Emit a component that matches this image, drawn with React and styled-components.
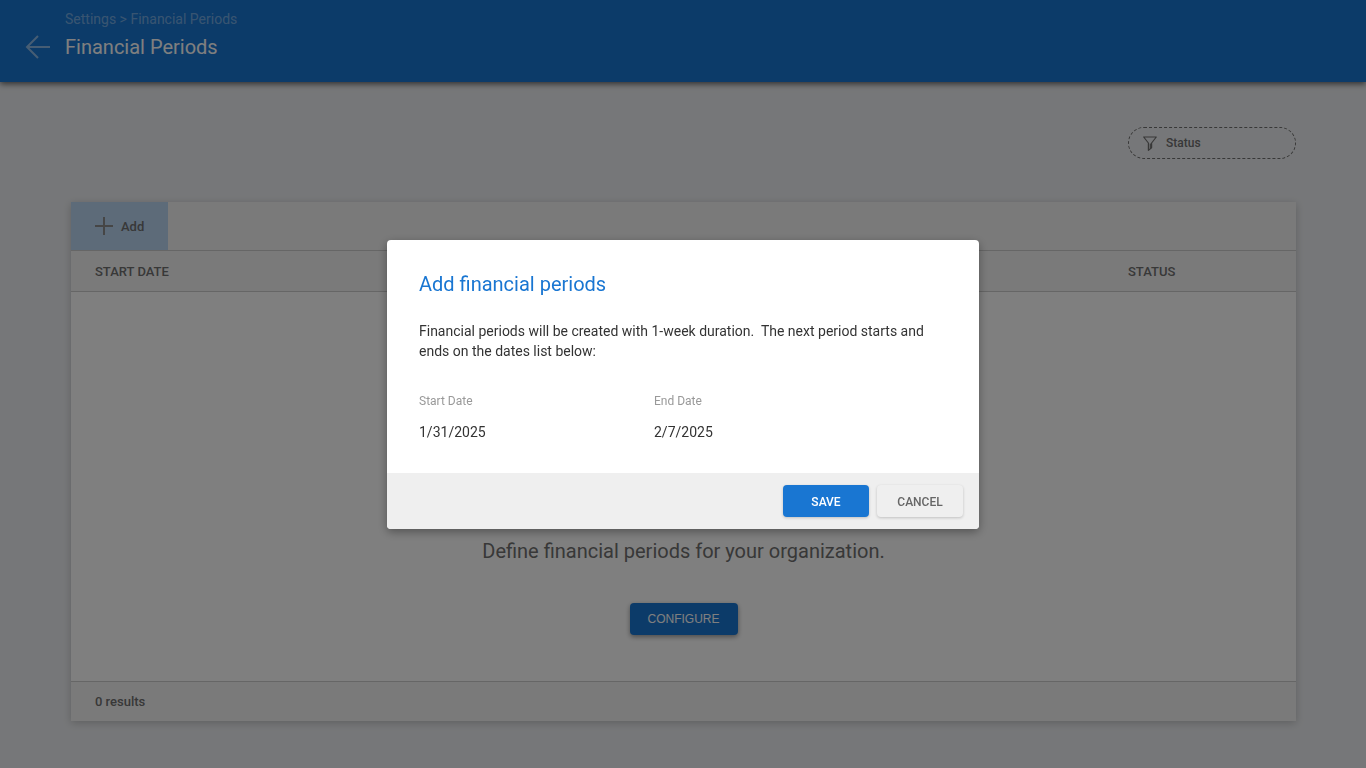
import styled, { createGlobalStyle } from "styled-components";

const periods = { start: "1/31/2025", end: "2/7/2025" };

export default function App() {
  return (
    <>
      <GlobalStyle />
      <Page>
        <Header>
          <BackLink href="#settings" aria-label="Back to settings">
            <svg width="26" height="24" viewBox="0 0 26 24" fill="none" stroke="currentColor" strokeWidth="2">
              <path d="M25 12H2M13 1L2 12l11 11" />
            </svg>
          </BackLink>
          <div>
            <Breadcrumb>
              <a href="#settings">Settings</a> &gt; Financial Periods
            </Breadcrumb>
            <Title>Financial Periods</Title>
          </div>
        </Header>
        <Main>
          <Filters>
            <FilterButton type="button">
              <svg width="14" height="15" viewBox="0 0 14 15" fill="none" stroke="currentColor" strokeWidth="1.2" strokeLinejoin="round">
                <path d="M.7 1h12.6L8.6 7v4.8l-3.2 2.5V7z" />
                <path d="M7.3 7.5v4.8" />
              </svg>
              Status
            </FilterButton>
          </Filters>
          <Card>
            <Toolbar>
              <AddButton type="button">
                <svg width="18" height="18" viewBox="0 0 18 18" fill="none" stroke="#8c8c8c" strokeWidth="2">
                  <path d="M9 0v18M0 9h18" />
                </svg>
                Add
              </AddButton>
            </Toolbar>
            <Table>
              <thead>
                <tr>
                  <HeadCell scope="col">START DATE</HeadCell>
                  <HeadCell scope="col" $narrow>STATUS</HeadCell>
                </tr>
              </thead>
            </Table>
            <Empty>
              <EmptyText>Define financial periods for your organization.</EmptyText>
              <ConfigureButton type="button">CONFIGURE</ConfigureButton>
            </Empty>
            <CardFooter>0 results</CardFooter>
          </Card>
        </Main>
      </Page>
      <Overlay>
        <Dialog role="dialog" aria-modal="true" aria-labelledby="dialog-title">
          <DialogBody>
            <DialogTitle id="dialog-title">Add financial periods</DialogTitle>
            <DialogText>
              Financial periods will be created with 1-week duration.&nbsp; The next period starts and
              ends on the dates list below:
            </DialogText>
            <Dates>
              <div>
                <DateLabel>Start Date</DateLabel>
                <DateValue>{periods.start}</DateValue>
              </div>
              <div>
                <DateLabel>End Date</DateLabel>
                <DateValue>{periods.end}</DateValue>
              </div>
            </Dates>
          </DialogBody>
          <DialogFooter>
            <DialogButton type="button" $primary>SAVE</DialogButton>
            <DialogButton type="button">CANCEL</DialogButton>
          </DialogFooter>
        </Dialog>
      </Overlay>
    </>
  );
}

const GlobalStyle = createGlobalStyle`
  * {
    box-sizing: border-box;
  }

  body {
    margin: 0;
    background: #edeff2;
    color: #707070;
    font-family: Roboto, sans-serif;
    font-size: 14px;
  }

  button {
    font-family: inherit;
    cursor: pointer;
  }

  svg {
    display: block;
    flex: none;
  }
`;

const Page = styled.div`
  display: flex;
  flex-direction: column;
  min-height: 100vh;
`;

const Header = styled.header`
  display: flex;
  align-items: flex-end;
  gap: 14px;
  height: 82px;
  padding: 0 25px 23px;
  background: #1976d2;
  box-shadow: 0 2px 6px rgba(0, 0, 0, 0.6);
  color: #fff;
`;

const BackLink = styled.a`
  color: rgba(255, 255, 255, 0.5);
`;

const Breadcrumb = styled.nav`
  line-height: 20px;
  color: rgba(255, 255, 255, 0.4);

  a {
    color: inherit;
    text-decoration: none;
  }
`;

const Title = styled.h1`
  margin: 6px 0 0;
  font-size: 20px;
  font-weight: 400;
  line-height: 24px;
`;

const Main = styled.main`
  display: flex;
  flex: 1;
  flex-direction: column;
  padding: 45px 70px 47px 71px;
`;

const Filters = styled.div`
  display: flex;
  justify-content: flex-end;
  margin-bottom: 43px;
`;

const FilterButton = styled.button`
  display: flex;
  align-items: center;
  gap: 9px;
  width: 168px;
  height: 32px;
  padding: 0 14px;
  border: 1px dashed #707070;
  border-radius: 16px;
  background: none;
  color: #707070;
  font-size: 12px;
  font-weight: 500;
`;

const Card = styled.section`
  display: flex;
  flex: 1;
  flex-direction: column;
  background: #fff;
  box-shadow: 0 2px 8px rgba(0, 0, 0, 0.2);
`;

const Toolbar = styled.div`
  display: flex;
  height: 48px;
  background: #f5f5f5;
`;

const AddButton = styled.button`
  display: flex;
  align-items: center;
  gap: 8px;
  padding: 0 24px;
  border: 0;
  background: #bad6f2;
  color: #707070;
  font-size: 13px;
  font-weight: 500;
`;

const Table = styled.table`
  width: 100%;
  border-spacing: 0;
  background: #f5f5f5;
`;

const HeadCell = styled.th`
  width: ${(props) => (props.$narrow ? "192px" : "auto")};
  height: 42px;
  padding: 0 24px;
  border: solid #ccc;
  border-width: 1px 0;
  font-size: 13px;
  font-weight: 500;
  text-align: left;
`;

const Empty = styled.div`
  display: flex;
  flex: 1;
  flex-direction: column;
  align-items: center;
  justify-content: flex-end;
  gap: 40px;
  padding-bottom: 46px;
`;

const EmptyText = styled.p`
  margin: 0;
  font-size: 20px;
  line-height: 24px;
`;

const ConfigureButton = styled.button`
  height: 32px;
  padding: 0 18px;
  border: 0;
  border-radius: 4px;
  background: #1976d2;
  box-shadow: 0 2px 5px rgba(0, 0, 0, 0.4);
  color: #fff;
  font-family: "Liberation Sans", Arial, sans-serif;
  font-size: 12px;
`;

const CardFooter = styled.footer`
  height: 40px;
  padding: 0 24px;
  border-top: 1px solid #ccc;
  background: #f5f5f5;
  font-size: 13px;
  font-weight: 500;
  line-height: 40px;
`;

const Overlay = styled.div`
  position: fixed;
  inset: 0;
  display: flex;
  align-items: center;
  justify-content: center;
  padding: 16px;
  background: rgba(0, 0, 0, 0.5);
`;

const Dialog = styled.section`
  width: 100%;
  max-width: 592px;
  border-radius: 4px;
  overflow: hidden;
  background: #fff;
  box-shadow: 0 3px 10px rgba(0, 0, 0, 0.35);
`;

const DialogBody = styled.div`
  padding: 32px 32px 31px;
`;

const DialogTitle = styled.h2`
  margin: 0 0 25px;
  color: #1976d2;
  font-size: 20px;
  font-weight: 400;
  line-height: 24px;
`;

const DialogText = styled.p`
  margin: 0 0 32px;
  color: #333;
  line-height: 20px;
`;

const Dates = styled.dl`
  display: grid;
  grid-template-columns: 235px 1fr;
  margin: 0;
`;

const DateLabel = styled.dt`
  margin-bottom: 13px;
  color: #999;
  font-size: 12px;
  line-height: 16px;
`;

const DateValue = styled.dd`
  margin: 0;
  color: #333;
  line-height: 20px;
`;

const DialogFooter = styled.footer`
  display: flex;
  align-items: center;
  justify-content: flex-end;
  gap: 8px;
  height: 56px;
  padding: 0 16px;
  background: #efefef;
`;

const DialogButton = styled.button`
  min-width: 86px;
  height: 32px;
  padding: 2px 20px 0;
  border: 0;
  border-radius: 4px;
  background: ${(props) => (props.$primary ? "#1976d2" : "#efefef")};
  box-shadow: 0 1px 3px rgba(0, 0, 0, 0.2);
  color: ${(props) => (props.$primary ? "#fff" : "#666")};
  font-size: 12px;
  font-weight: 500;
`;
